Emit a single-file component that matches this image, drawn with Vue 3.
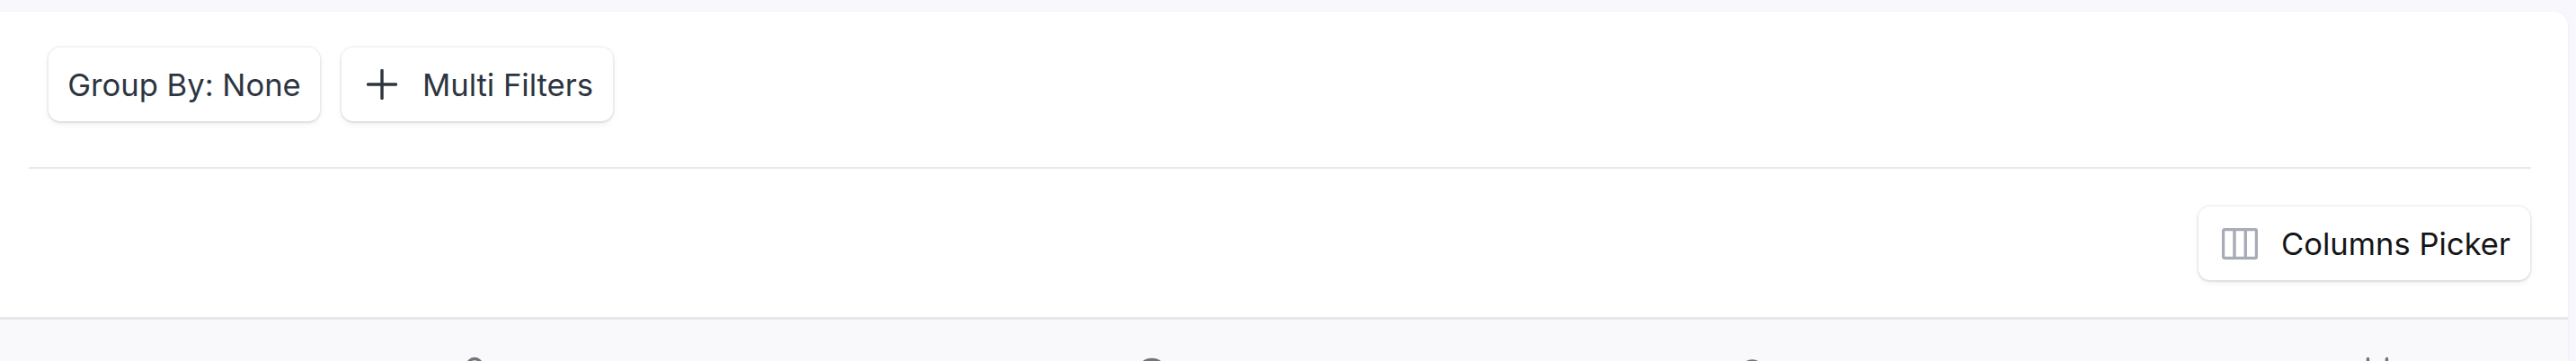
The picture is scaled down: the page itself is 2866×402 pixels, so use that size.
<script setup>
    import { ref } from 'vue'

    const groupBy = ref('None')
    const columns = ['owner', 'status', 'time', 'date']
</script>

<template>
    <div class="page">
        <section class="card">
            <div class="filters">
                <button class="btn">Group By: {{ groupBy }}</button>
                <button class="btn btn-filter">
                    <svg class="plus" viewBox="0 0 34 34">
                        <path d="M17 1.5v31M1.5 17h31" />
                    </svg>
                    <span>Multi Filters</span>
                </button>
            </div>

            <div class="tools">
                <button class="btn btn-columns">
                    <svg class="columns-icon" viewBox="0 0 40 35">
                        <rect x="1.5" y="1.5" width="37" height="32" rx="2" />
                        <path d="M14 1.5v32M26.3 1.5v32" />
                    </svg>
                    <span>Columns Picker</span>
                </button>
            </div>

            <div class="table-head">
                <div v-for="column in columns" :key="column" class="head-cell">
                    <svg class="head-icon" viewBox="0 0 40 40">
                        <template v-if="column === 'owner'">
                            <circle cx="20" cy="10.5" r="8" />
                            <path d="M4 38c0-9 7-14 16-14s16 5 16 14" />
                        </template>
                        <template v-else-if="column === 'status'">
                            <circle cx="20.5" cy="19" r="15.5" />
                            <path d="M20 12v9l6 4" />
                        </template>
                        <template v-else-if="column === 'time'">
                            <circle cx="20.5" cy="17" r="12" />
                        </template>
                        <template v-else>
                            <rect x="4" y="8" width="32" height="29" rx="3" />
                            <path d="M9.5 2.5v8M30.5 2.5v8M4 17h32" />
                        </template>
                    </svg>
                </div>
            </div>
        </section>
    </div>
</template>

<style>
    body {
        background-color: #f7f7fd;
        overflow: hidden;
    }
</style>

<style scoped>
    .page {
        height: 402px;
        box-sizing: border-box;
        padding: 13px 9px 0 0;
        overflow: hidden;
        font-family: Inter, "Liberation Sans", sans-serif;
    }

    .card {
        height: 500px;
        margin-left: -12px;
        padding-left: 12px;
        border-radius: 16px;
        background-color: #fff;
        box-shadow: 0 1px 4px rgba(60, 60, 110, 0.06);
        overflow: hidden;
    }

    .filters {
        display: flex;
        gap: 24px;
        height: 175px;
        box-sizing: border-box;
        margin: 0 41px 0 32px;
        padding: 40px 0 0 22px;
        border-bottom: 2px solid #e9eaec;
    }

    .btn {
        display: flex;
        align-items: center;
        justify-content: center;
        width: 302px;
        height: 82px;
        padding: 0;
        border: none;
        border-radius: 13px;
        background-color: #fff;
        box-shadow: 0 0 0 2px rgba(0, 0, 0, 0.035), 0 2px 3px rgba(0, 0, 0, 0.07), 0 3px 8px rgba(0, 0, 0, 0.05);
        font-family: inherit;
        font-size: 34.6px;
        color: #2d3540;
        white-space: nowrap;
    }

    svg {
        display: block;
        flex: none;
        fill: none;
        stroke-linecap: round;
    }

    .btn-filter {
        gap: 28px;
        padding-left: 6px;
    }

    .plus {
        width: 34px;
        height: 34px;
        stroke: #2d3540;
        stroke-width: 3.4;
    }

    .tools {
        display: flex;
        justify-content: flex-end;
        height: 165px;
        box-sizing: border-box;
        padding: 42px 42px 0 0;
    }

    .btn-columns {
        width: 369px;
        gap: 26px;
        padding-left: 4px;
        color: #161618;
    }

    .columns-icon {
        width: 40px;
        height: 35px;
        stroke: #a6abb5;
        stroke-width: 3.4;
    }

    .table-head {
        display: grid;
        grid-template-columns: 753px 668px 696px 200px;
        height: 120px;
        box-sizing: border-box;
        padding: 41px 0 0 508px;
        border-top: 3px solid #e7e8ec;
        background-color: #f9f9fc;
    }

    .head-icon {
        width: 40px;
        height: 40px;
        stroke: #71747b;
        stroke-width: 3.4;
    }
</style>
